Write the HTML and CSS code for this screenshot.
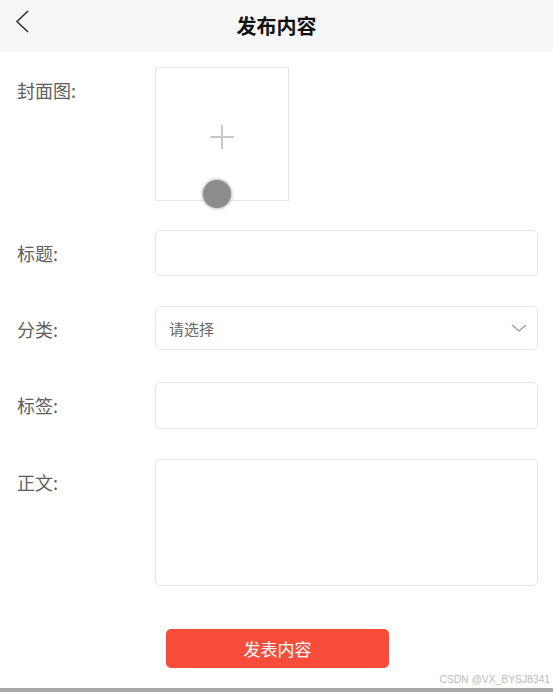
FILE: index.html
```html
<!DOCTYPE html>
<html lang="zh-CN">
<head>
    <meta charset="UTF-8">
    <meta name="viewport" content="width=device-width, initial-scale=1.0">
    <title>发布内容</title>
    <link rel="stylesheet" href="styles.css">
</head>
<body>
    <div class="page">
        <div class="header">
            <svg class="back" width="20" height="30" viewBox="0 0 20 30">
                <polyline points="13,1 2,11.5 13,22" fill="none" stroke="#333" stroke-width="1.6" />
            </svg>
            <h1>发布内容</h1>
        </div>

        <div class="form">
            <div class="row cover">
                <label>封面图:</label>
                <div class="upload">
                    <span class="plus"></span>
                    <span class="dot"></span>
                </div>
            </div>
            <div class="row">
                <label>标题:</label>
                <input type="text" class="field" />
            </div>
            <div class="row wide-gap">
                <label>分类:</label>
                <div class="field select">
                    <span>请选择</span>
                    <svg width="16" height="10" viewBox="0 0 16 10">
                        <polyline points="1,2 8,8 15,2" fill="none" stroke="#999" stroke-width="1.3" />
                    </svg>
                </div>
            </div>
            <div class="row">
                <label>标签:</label>
                <input type="text" class="field tags" />
            </div>
            <div class="row">
                <label>正文:</label>
                <textarea class="field body-text"></textarea>
            </div>
            <div class="actions">
                <button>发表内容</button>
            </div>
        </div>

        <div class="mark">CSDN @VX_BYSJ8341</div>
    </div>
</body>
</html>
```

FILE: styles.css
```css
body {
    margin: 0;
    font-family: "Noto Sans CJK SC", "Noto Sans", sans-serif;
    background: #fff;
}
.page {
    position: relative;
    height: 692px;
    box-sizing: border-box;
    border-bottom: 4px solid #a8a8a8;
    overflow: hidden;
}
.header {
    position: relative;
    height: 52px;
    background: #f7f7f7;
    display: flex;
    align-items: center;
    justify-content: center;
}
.header h1 {
    margin: 0;
    font-size: 20px;
    font-weight: bold;
    color: #111;
    line-height: 52px;
}
.back {
    position: absolute;
    left: 15px;
    top: 10px;
}
.form {
    padding: 15px 15px 0 17px;
}
.row {
    display: flex;
    align-items: flex-start;
    margin-bottom: 30px;
}
.row.cover {
    margin-bottom: 29px;
}
.row.wide-gap {
    margin-bottom: 32px;
}
.row label {
    width: 138px;
    flex: none;
    padding-top: 10px;
    font-size: 18px;
    line-height: 26px;
    color: #606060;
}
.upload {
    position: relative;
    width: 132px;
    height: 132px;
    border: 1px solid #e6e6e6;
}
.plus {
    position: absolute;
    left: 54px;
    top: 57px;
    width: 24px;
    height: 24px;
}
.plus::before,
.plus::after {
    content: "";
    position: absolute;
    background: #c9c9c9;
}
.plus::before {
    left: 11px;
    top: 0;
    width: 2px;
    height: 24px;
}
.plus::after {
    left: 0;
    top: 11px;
    width: 24px;
    height: 2px;
}
.dot {
    position: absolute;
    left: 47px;
    top: 112px;
    width: 28px;
    height: 28px;
    border-radius: 50%;
    background: #8c8c8c;
    box-shadow: 0 0 3px 1px rgba(140, 140, 140, 0.6);
}
.field {
    flex: 1;
    box-sizing: border-box;
    height: 46px;
    margin: 0;
    border: 1px solid #e6e6e6;
    border-radius: 5px;
    background: #fff;
    font-family: inherit;
    font-size: 15px;
    outline: none;
}
.select {
    height: 44px;
    display: flex;
    align-items: center;
    justify-content: space-between;
    padding: 0 10px 0 13px;
    color: #666;
}
.tags {
    height: 47px;
}
.body-text {
    height: 127px;
    resize: none;
}
.actions {
    padding: 13px 0 0 149px;
}
button {
    width: 223px;
    height: 39px;
    border: none;
    border-radius: 5px;
    background: #f84c3b;
    color: #fff;
    font-family: inherit;
    font-size: 17px;
    cursor: pointer;
}
.mark {
    position: absolute;
    right: 3px;
    bottom: 3px;
    font-family: "Liberation Sans", sans-serif;
    font-size: 10.3px;
    color: #bcbcbc;
}
```
